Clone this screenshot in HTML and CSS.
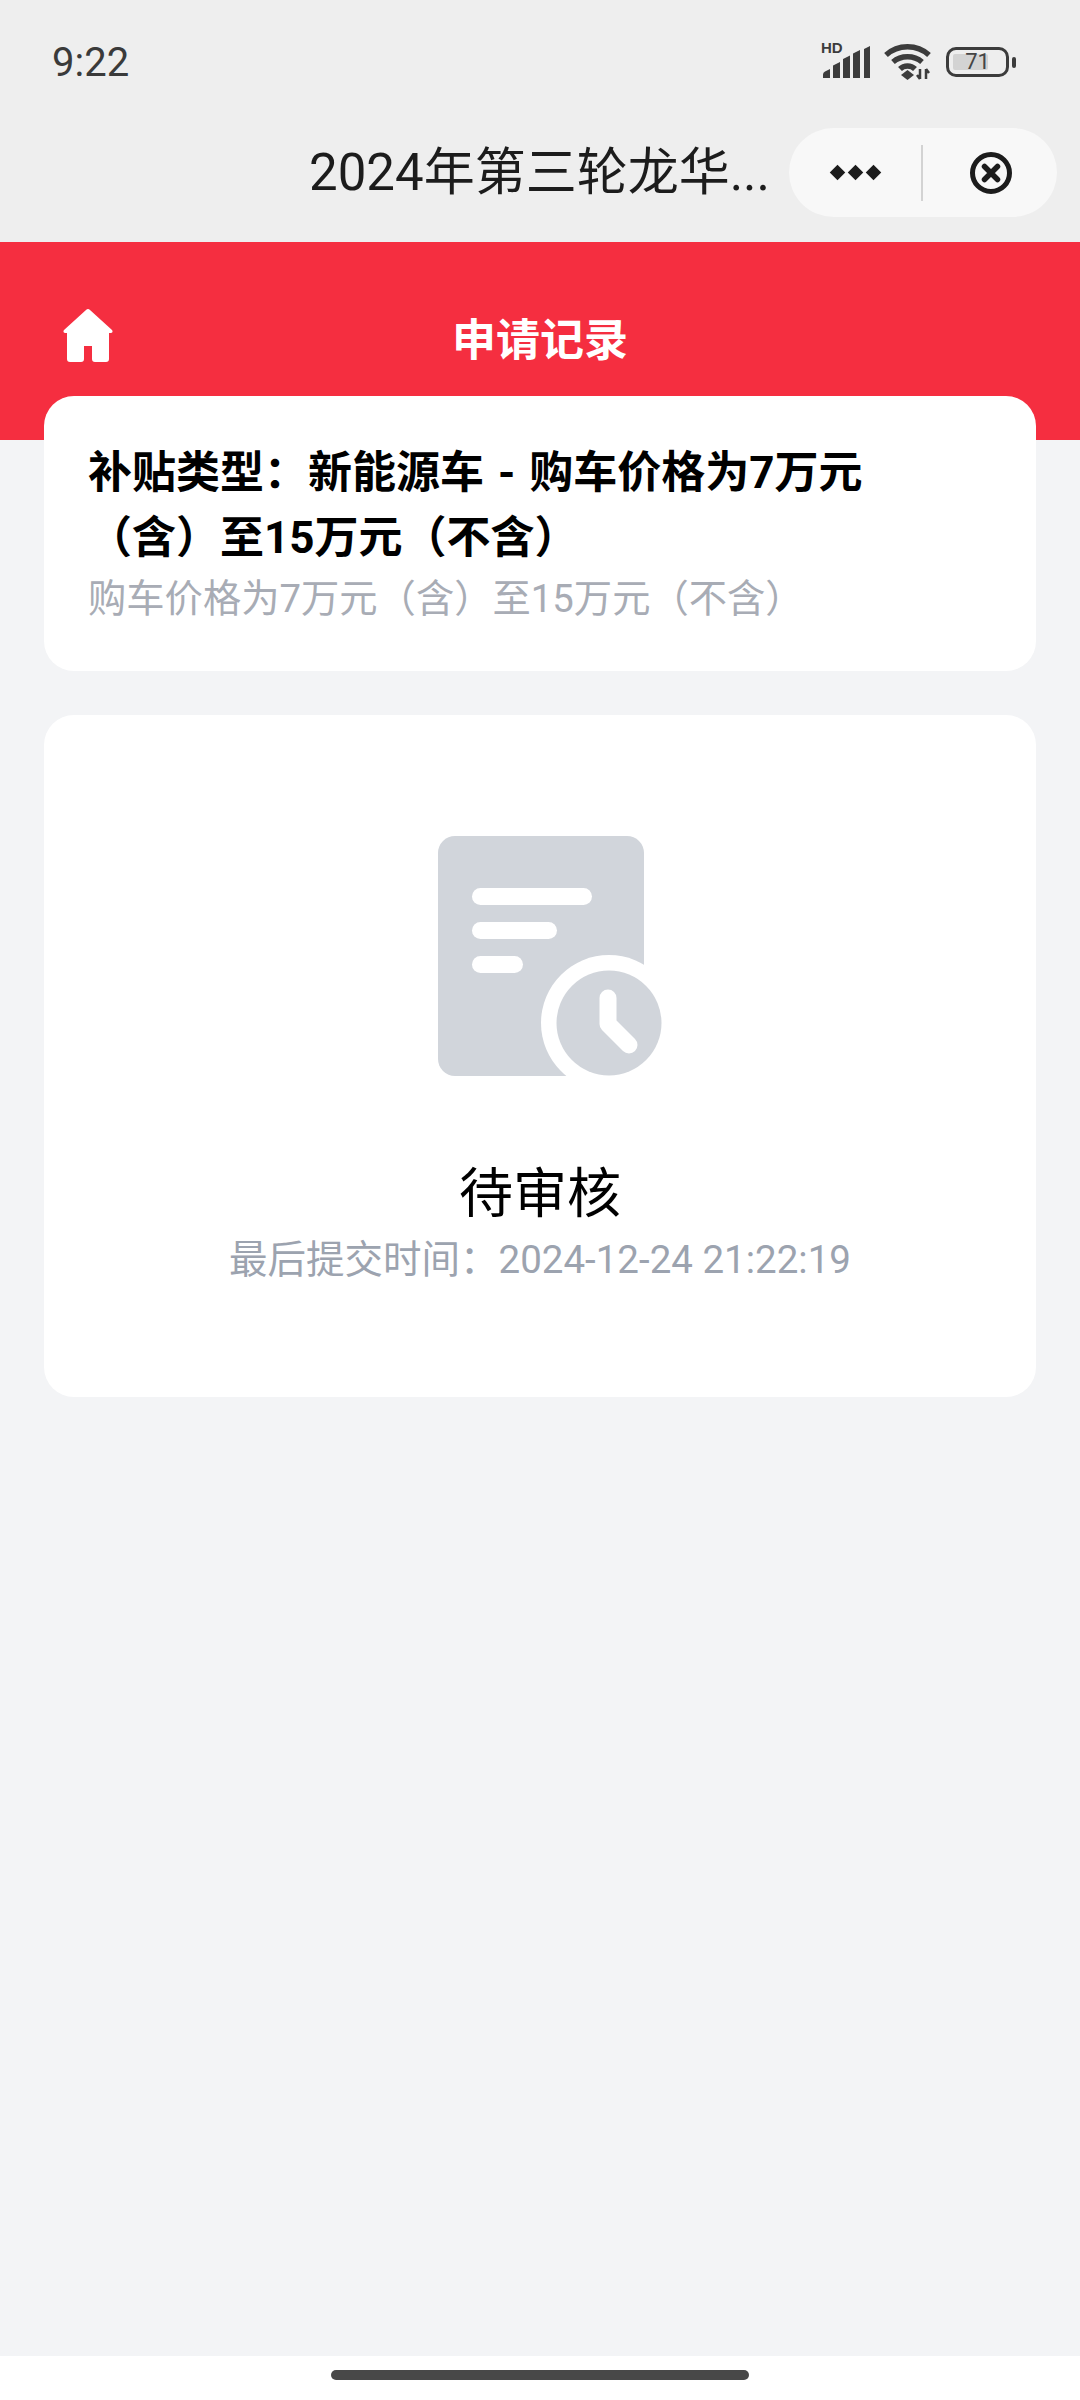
FILE: index.html
```html
<!DOCTYPE html>
<html lang="zh-CN">
<head>
    <meta charset="UTF-8">
    <title>申请记录</title>
    <link rel="stylesheet" href="styles.css">
</head>

<body>
    <div class="topbar">
        <div class="status">
            <span class="clock">9:22</span>
            <div class="status-icons">
                <div class="signal">
                    <span class="hd">HD</span>
                    <svg class="bars" width="48" height="32" viewBox="0 0 48 32">
                        <path d="M0 32V28.500Q0 26.500 2 25.500L7 23V32Z M10 32V19.500L17 16V32Z M20 32V13L27 9.500V32Z M30 32V7.500L37 4V32Z M41 32V3L47 0V32Z" fill="#3c3c3c" />
                    </svg>
                </div>
                <svg class="wifi" width="48" height="36" viewBox="0 0 48 36">
                    <g fill="none" stroke="#3c3c3c" stroke-width="5.500">
                        <path d="M2 11C14 0 33 0 45 11" />
                        <path d="M9 18C17 11 30 11 38 18" />
                        <path d="M16 25C20 21 27 21 31 25" />
                    </g>
                    <path d="M23.500 26L30 31L23.500 36L17 31Z" fill="#3c3c3c" />
                    <path d="M36 25V35M33 31L36 35M42 25V35M42 25L45 29" fill="none" stroke="#3c3c3c" stroke-width="2.500" />
                </svg>
                <div class="battery">
                    <div class="battery-body">
                        <div class="battery-fill" style="width: 71%"></div>
                        <span class="battery-num">71</span>
                    </div>
                    <div class="battery-nub"></div>
                </div>
            </div>
        </div>
        <div class="nav">
            <div class="nav-title">2024年第三轮龙华...</div>
            <div class="capsule">
                <div class="capsule-more">
                    <i></i><i></i><i></i>
                </div>
                <div class="capsule-line"></div>
                <div class="capsule-close">
                    <svg width="44" height="44" viewBox="0 0 44 44">
                        <circle cx="22" cy="22" r="18.500" fill="none" stroke="#1c1c1c" stroke-width="5" />
                        <path d="M15.500 15.500L28.500 28.500M28.500 15.500L15.500 28.500" stroke="#1c1c1c" stroke-width="5.500" stroke-linecap="round" />
                    </svg>
                </div>
            </div>
        </div>
    </div>

    <div class="header">
        <svg class="home" width="50" height="54" viewBox="0 0 50 54">
            <path d="M23 2Q25 0 27 2L49 22Q50.500 24.500 48 25H46V51Q46 54 43 54H32Q29 54 29 51V38H21V51Q21 54 18 54H7Q4 54 4 51V25H2Q-.5 24.500 1 22Z" fill="#fff" />
        </svg>
        <h1>申请记录</h1>
    </div>

    <main class="content">
        <section class="card type-card">
            <h2>补贴类型：新能源车 - 购车价格为7万元（含）至15万元（不含）</h2>
            <p>购车价格为7万元（含）至15万元（不含）</p>
        </section>

        <section class="card result-card">
            <svg class="doc-icon" width="224" height="240" viewBox="0 0 224 240">
                <rect width="206" height="240" rx="17" fill="#d1d5db" />
                <g fill="#fff">
                    <rect x="34" y="52" width="120" height="17" rx="8.500" />
                    <rect x="34" y="86" width="85" height="17" rx="8.500" />
                    <rect x="34" y="120" width="51" height="17" rx="8.500" />
                    <circle cx="171" cy="187" r="68" />
                </g>
                <circle cx="171" cy="187" r="52.500" fill="#d1d5db" />
                <path d="M170 162V188L191 209" fill="none" stroke="#fff" stroke-width="17" stroke-linecap="round" stroke-linejoin="round" />
            </svg>
            <div class="result-title">待审核</div>
            <div class="result-time">最后提交时间：2024-12-24 21:22:19</div>
        </section>
    </main>

    <div class="home-bar">
        <div class="home-line"></div>
    </div>
</body>
</html>
```

FILE: styles.css
```css
* {
    box-sizing: border-box;
}

body {
    margin: 0;
    height: 2400px;
    display: flex;
    flex-direction: column;
    background: #f3f4f6;
    font-family: Roboto, "Noto Sans CJK SC", sans-serif;
}

.topbar {
    height: 242px;
    background: #eeeeee;
}

.status {
    height: 124px;
    padding: 0 64px 0 52px;
    display: flex;
    align-items: center;
    justify-content: space-between;
}

.clock {
    font-size: 40px;
    color: #3a3a3a;
}

.status-icons {
    display: flex;
    align-items: center;
    gap: 13px;
}

.signal {
    width: 48px;
    height: 32px;
    position: relative;
    display: flex;
    justify-content: flex-end;
}

.hd {
    position: absolute;
    left: -2px;
    top: -6px;
    font-family: "Liberation Sans", sans-serif;
    font-size: 15px;
    font-weight: 700;
    line-height: 15px;
    color: #3c3c3c;
}

.battery {
    display: flex;
    align-items: center;
    gap: 3px;
    margin-left: 1px;
}

.battery-body {
    width: 63px;
    height: 30px;
    padding: 4px;
    border: 3px solid #3c3c3c;
    border-radius: 10px;
    position: relative;
}

.battery-fill {
    height: 100%;
    background: #d3d3d3;
    border-radius: 2px;
}

.battery-num {
    position: absolute;
    inset: 0;
    text-align: center;
    font-size: 22px;
    line-height: 24px;
    color: #444444;
}

.battery-nub {
    width: 4px;
    height: 11px;
    background: #3c3c3c;
    border-radius: 2px;
}

.nav {
    height: 118px;
    padding: 0 23px 21px 0;
    display: flex;
    align-items: center;
    justify-content: flex-end;
    gap: 19px;
}

.nav-title {
    margin-bottom: 9px;
    font-size: 51px;
    color: #1c1c1c;
    white-space: nowrap;
}

.capsule {
    width: 268px;
    height: 89px;
    background: #f8f8f8;
    border-radius: 45px;
    display: flex;
    align-items: center;
}

.capsule-more {
    flex: 1;
    display: flex;
    justify-content: center;
    gap: 7px;
}

.capsule-more i {
    width: 11px;
    height: 11px;
    background: #1c1c1c;
    transform: rotate(45deg);
}

.capsule-line {
    width: 2px;
    height: 56px;
    background: #d3d3d3;
}

.capsule-close {
    width: 134px;
    padding-left: 2px;
    display: flex;
    justify-content: center;
}

.capsule-close svg {
    display: block;
}

.header {
    height: 198px;
    padding: 0 60px 42px 63px;
    background: #f52e40;
    display: flex;
    align-items: center;
    position: relative;
}

.home {
    display: block;
    margin-top: 30px;
}

.header h1 {
    position: absolute;
    left: 0;
    right: 0;
    top: 55px;
    margin: 0;
    text-align: center;
    font-size: 44px;
    line-height: 88px;
    font-weight: 700;
    color: #ffffff;
}

.content {
    flex: 1;
    margin-top: -44px;
    padding: 0 44px;
    display: flex;
    flex-direction: column;
    gap: 44px;
    position: relative;
}

.card {
    background: #ffffff;
    border-radius: 30px;
}

.type-card {
    height: 275px;
    padding: 45px 44px 0;
}

.type-card h2 {
    margin: 0;
    width: 800px;
    font-size: 44px;
    line-height: 65px;
    font-weight: 700;
    word-spacing: 3px;
    color: #000000;
}

.type-card p {
    margin: 0;
    font-size: 38.3px;
    line-height: 56px;
    color: #a8acb5;
}

.result-card {
    height: 682px;
    padding-top: 121px;
    display: flex;
    flex-direction: column;
    align-items: center;
}

.doc-icon {
    display: block;
    margin-left: 19px;
}

.result-title {
    margin-top: 81px;
    font-size: 54px;
    line-height: 76px;
    color: #000000;
}

.result-time {
    margin-top: -1px;
    font-size: 38.500px;
    line-height: 56px;
    color: #9ca3af;
}

.home-bar {
    height: 44px;
    background: #ffffff;
    display: flex;
    justify-content: center;
    padding-top: 14px;
}

.home-line {
    width: 418px;
    height: 10px;
    background: #484848;
    border-radius: 5px;
}
```
